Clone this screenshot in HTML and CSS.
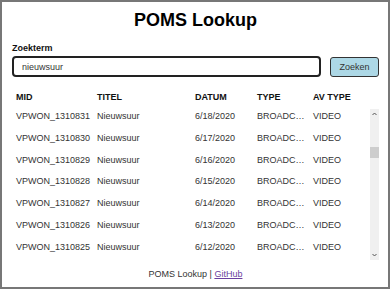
FILE: index.html
```html
<!DOCTYPE html>
<html lang="nl">
<head>
    <meta charset="UTF-8">
    <meta name="viewport" content="width=device-width, initial-scale=1.0">
    <title>POMS Lookup</title>
    <link rel="stylesheet" href="styles.css">
</head>
<body>
    <div class="app">
        <h1>POMS Lookup</h1>
        <label class="search-label" for="term">Zoekterm</label>
        <div class="search-row">
            <input type="text" id="term" class="search-input" value="nieuwsuur">
            <button class="search-btn">Zoeken</button>
        </div>

        <div class="results-head">
            <span>MID</span>
            <span>TITEL</span>
            <span>DATUM</span>
            <span>TYPE</span>
            <span>AV TYPE</span>
        </div>
        <div class="results">
            <div class="rows" id="rows"></div>
            <div class="scrollbar">
                <svg class="arrow" width="9" height="10" viewBox="0 0 9 10"><path d="M2.5 6 L4.5 4 L6.5 6" fill="none" stroke="#555" stroke-width="1"/></svg>
                <div class="track"><div class="thumb"></div></div>
                <svg class="arrow" width="9" height="10" viewBox="0 0 9 10"><path d="M2.5 4 L4.5 6 L6.5 4" fill="none" stroke="#555" stroke-width="1"/></svg>
            </div>
        </div>

        <footer class="footer">POMS Lookup | <a href="#">GitHub</a></footer>
    </div>

    <script>
        const rows = document.getElementById('rows');
        // only the rows that are visible in the scroll window
        for (let i = 0; i < 7; i++) {
            const mid = 'VPWON_' + (1310831 - i);
            const date = '6/' + (18 - i) + '/2020';
            const row = document.createElement('div');
            row.className = 'row';
            row.innerHTML =
                '<span>' + mid + '</span>' +
                '<span>Nieuwsuur</span>' +
                '<span>' + date + '</span>' +
                '<span class="clip">BROADCAST</span>' +
                '<span>VIDEO</span>';
            rows.appendChild(row);
        }
    </script>
</body>
</html>
```

FILE: styles.css
```css
* {
    box-sizing: border-box;
}
body {
    margin: 0;
    font-family: "Liberation Sans", Arial, sans-serif;
    font-size: 9px;
    color: #333;
    background: #fff;
}
.app {
    height: 289px;
    border: 2px solid #777;
    padding: 7px 9px 0 10px;
    display: flex;
    flex-direction: column;
}
h1 {
    margin: 0;
    font-size: 18px;
    line-height: 22px;
    text-align: center;
    color: #000;
}
.search-label {
    display: block;
    margin-top: 12px;
    font-weight: bold;
    line-height: 11px;
    color: #111;
}
.search-row {
    display: flex;
    align-items: center;
    gap: 9px;
    margin-top: 2px;
}
.search-input {
    flex: 1;
    height: 21px;
    border: 2px solid #222;
    border-radius: 4px;
    padding: 0 8px;
    font-family: inherit;
    font-size: 9px;
    color: #333;
    outline: none;
}
.search-btn {
    width: 49px;
    height: 20px;
    border: 1px solid #333;
    border-radius: 3px;
    background: #add8e6;
    font-family: inherit;
    font-size: 9px;
    color: #333;
    padding: 0;
}
.results-head,
.row {
    display: grid;
    grid-template-columns: 81px 98px 62px 56px 1fr;
    padding-left: 4px;
}
.results-head {
    margin-top: 15px;
    line-height: 11px;
    font-weight: bold;
    color: #111;
}
.results {
    display: flex;
    height: 153px;
    margin-top: 5px;
}
.rows {
    flex: 1;
    overflow: hidden;
}
.row {
    height: 21.8px;
    padding-top: 2px;
    line-height: 13px;
}
.clip {
    overflow: hidden;
    white-space: nowrap;
    text-overflow: ellipsis;
    padding-right: 6px;
}
.scrollbar {
    width: 9px;
    margin: 1px 0;
    background: #f0f0f0;
    display: flex;
    flex-direction: column;
}
.arrow {
    display: block;
    flex: none;
}
.track {
    flex: 1;
}
.thumb {
    margin-top: 28px;
    height: 11px;
    background: #cdcdcd;
}
.footer {
    text-align: center;
    margin-top: 8px;
    line-height: 11px;
}
.footer a {
    color: #6a3fa0;
}
```
